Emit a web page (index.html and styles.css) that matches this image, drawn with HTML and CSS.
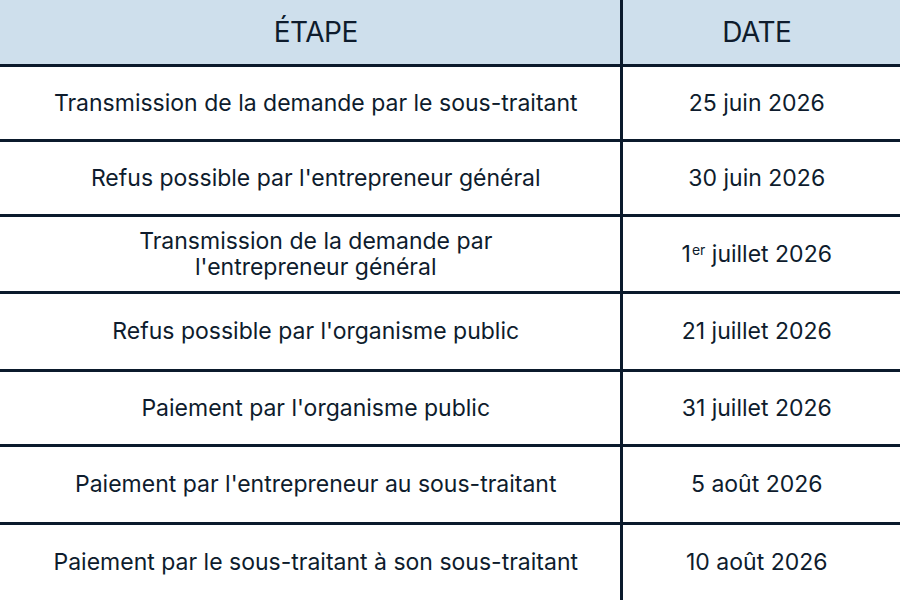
FILE: index.html
```html
<!DOCTYPE html>
<html lang="fr">
<head>
<meta charset="utf-8">
<title>Étapes</title>
<link rel="stylesheet" href="styles.css">
</head>
<body>
<table class="schedule">
  <thead>
    <tr>
      <th class="step">ÉTAPE</th>
      <th class="date">DATE</th>
    </tr>
  </thead>
  <tbody>
    <tr class="short"><td class="step">Transmission de la demande par le sous-traitant</td><td class="date">25 juin 2026</td></tr>
    <tr class="short"><td class="step">Refus possible par l'entrepreneur général</td><td class="date">30 juin 2026</td></tr>
    <tr class="tall"><td class="step">Transmission de la demande par<br>l'entrepreneur général</td><td class="date">1<sup>er</sup> juillet 2026</td></tr>
    <tr><td class="step">Refus possible par l'organisme public</td><td class="date">21 juillet 2026</td></tr>
    <tr class="short"><td class="step">Paiement par l'organisme public</td><td class="date">31 juillet 2026</td></tr>
    <tr><td class="step">Paiement par l'entrepreneur au sous-traitant</td><td class="date">5 août 2026</td></tr>
    <tr><td class="step">Paiement par le sous-traitant à son sous-traitant</td><td class="date">10 août 2026</td></tr>
  </tbody>
</table>
</body>
</html>
```

FILE: styles.css
```css
html, body {
  margin: 0;
  padding: 0;
  background: #ffffff;
}
body {
  width: 900px;
  height: 600px;
  overflow: hidden;
  font-family: Inter, "Noto Sans", sans-serif;
  color: #0e1c2d;
}
.schedule {
  width: 900px;
  border-collapse: collapse;
  table-layout: fixed;
}
.schedule th,
.schedule td {
  text-align: center;
  vertical-align: middle;
  padding: 0;
  box-sizing: border-box;
}
.schedule th {
  background: #cedfec;
  font-size: 28px;
  font-weight: 400;
  height: 65px;
  border-bottom: 3px solid #0b1a2c;
  letter-spacing: -0.5px;
}
.schedule td {
  font-size: 23px;
  height: 78px;
  line-height: 26px;
  border-bottom: 3px solid #0b1a2c;
  letter-spacing: 0;
}
.schedule tr.short td {
  height: 75px;
}
.schedule tr.tall td {
  height: 77px;
}
.schedule .step {
  width: 621px;
  border-right: 3px solid #0b1a2c;
  padding-left: 12px;
}
.schedule .date {
  padding-right: 9px;
}
.schedule sup {
  font-size: 14px;
  vertical-align: 7px;
  line-height: 0;
  margin-left: 1px;
}
```
